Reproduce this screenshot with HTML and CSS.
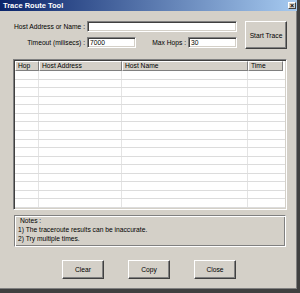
FILE: index.html
```html
<!DOCTYPE html>
<html>
<head>
<meta charset="utf-8">
<link rel="stylesheet" href="styles.css">
</head>
<body>
<div class="window">
  <div class="titlebar">
    <span class="title">Trace Route Tool</span>
    <span class="close">&#215;</span>
  </div>
  <div class="body">
    <div class="top">
      <div class="fields">
        <label class="lbl">Host Address or Name :</label>
        <div class="field"><span class="input wide"></span></div>
        <label class="lbl">Timeout (milisecs) :</label>
        <div class="field split">
          <span class="input short">7000</span>
          <label class="lbl hops">Max Hops :</label>
          <span class="input short">30</span>
        </div>
      </div>
      <div class="btn start">Start Trace</div>
    </div>

    <div class="list">
      <div class="head">
        <div class="hc c1">Hop</div>
        <div class="hc c2">Host Address</div>
        <div class="hc c3">Host Name</div>
        <div class="hc c4">Time</div>
      </div>
      <div class="rows">
        <div class="row"><i class="c1"></i><i class="c2"></i><i class="c3"></i><i class="c4"></i></div>
        <div class="row"><i class="c1"></i><i class="c2"></i><i class="c3"></i><i class="c4"></i></div>
        <div class="row"><i class="c1"></i><i class="c2"></i><i class="c3"></i><i class="c4"></i></div>
        <div class="row"><i class="c1"></i><i class="c2"></i><i class="c3"></i><i class="c4"></i></div>
        <div class="row"><i class="c1"></i><i class="c2"></i><i class="c3"></i><i class="c4"></i></div>
        <div class="row"><i class="c1"></i><i class="c2"></i><i class="c3"></i><i class="c4"></i></div>
        <div class="row"><i class="c1"></i><i class="c2"></i><i class="c3"></i><i class="c4"></i></div>
        <div class="row"><i class="c1"></i><i class="c2"></i><i class="c3"></i><i class="c4"></i></div>
        <div class="row"><i class="c1"></i><i class="c2"></i><i class="c3"></i><i class="c4"></i></div>
        <div class="row"><i class="c1"></i><i class="c2"></i><i class="c3"></i><i class="c4"></i></div>
        <div class="row"><i class="c1"></i><i class="c2"></i><i class="c3"></i><i class="c4"></i></div>
        <div class="row"><i class="c1"></i><i class="c2"></i><i class="c3"></i><i class="c4"></i></div>
        <div class="row"><i class="c1"></i><i class="c2"></i><i class="c3"></i><i class="c4"></i></div>
        <div class="row"><i class="c1"></i><i class="c2"></i><i class="c3"></i><i class="c4"></i></div>
        <div class="row"><i class="c1"></i><i class="c2"></i><i class="c3"></i><i class="c4"></i></div>
        <div class="row"><i class="c1"></i><i class="c2"></i><i class="c3"></i><i class="c4"></i></div>
      </div>
    </div>

    <div class="notes">
      <div class="ntitle">Notes :</div>
      <div>1) The traceroute results can be inaccurate.</div>
      <div>2) Try multiple times.</div>
    </div>

    <div class="buttons">
      <div class="btn act">Clear</div>
      <div class="btn act">Copy</div>
      <div class="btn act">Close</div>
    </div>
  </div>
</div>
</body>
</html>
```

FILE: styles.css
```css
* { box-sizing: border-box; }
html, body { margin: 0; padding: 0; }
body {
  width: 300px;
  height: 293px;
  background: #808080;
  font-family: "Liberation Sans", Arial, sans-serif;
  font-size: 6.7px;
  color: #000;
  overflow: hidden;
}
.window {
  width: 300px;
  height: 293px;
  background: #d4d0c8;
  border-right: 3px solid #404040;
  border-bottom: 4px solid #404040;
  box-shadow: inset -1px -1px #808080;
  display: flex;
  flex-direction: column;
}
.titlebar {
  height: 11px;
  flex: none;
  background: linear-gradient(to right, #0a246a, #a6caf0);
  display: flex;
  align-items: center;
  justify-content: space-between;
  padding: 0 1px 0 3px;
}
.title {
  color: #fff;
  font-weight: bold;
  font-size: 7.5px;
  line-height: 11px;
}
.close {
  width: 8px;
  height: 7px;
  background: #d4d0c8;
  border: 1px solid;
  border-color: #fff #404040 #404040 #fff;
  font-size: 7px;
  line-height: 5px;
  text-align: center;
  font-weight: bold;
}
.body {
  flex: 1;
  display: flex;
  flex-direction: column;
  padding: 10px 0 0 13px;
}
.top {
  display: flex;
  align-items: flex-start;
}
.fields {
  display: grid;
  grid-template-columns: 74px 150px;
  column-gap: 0;
  row-gap: 5px;
  align-items: center;
}
.lbl {
  text-align: right;
  padding-right: 2px;
  white-space: nowrap;
}
.field { display: flex; align-items: center; }
.split { justify-content: space-between; }
.hops { padding-right: 2px; margin-left: auto; }
.input {
  display: block;
  height: 11px;
  background: #fff;
  border: 1px solid;
  border-color: #808080 #fff #fff #808080;
  box-shadow: inset 1px 1px #404040, inset -1px -1px #d4d0c8;
  padding: 0 2px;
  line-height: 9px;
}
.wide { width: 150px; }
.short { width: 49px; }
.btn {
  background: #d4d0c8;
  border: 1px solid;
  border-color: #fff #404040 #404040 #fff;
  box-shadow: inset -1px -1px #808080;
  display: flex;
  align-items: center;
  justify-content: center;
  white-space: nowrap;
}
.start {
  width: 42px;
  height: 28px;
  margin-left: 8px;
}
.list {
  margin-top: 10px;
  width: 274px;
  height: 151px;
  border: 1px solid;
  border-color: #808080 #fff #fff #808080;
  box-shadow: inset 1px 1px #404040, inset -1px -1px #d4d0c8;
  padding: 1px;
  background: #fff;
  display: flex;
  flex-direction: column;
}
.head {
  display: flex;
  height: 10px;
  flex: none;
}
.hc {
  background: #d4d0c8;
  border: 1px solid;
  border-color: #fff #808080 #808080 #fff;
  line-height: 8px;
  padding-left: 2px;
  white-space: nowrap;
}
.c1 { width: 24px; }
.c2 { width: 83px; }
.c3 { width: 126px; }
.c4 { width: 37px; }
.head .c4 { width: 35px; }
.rows {
  flex: 1;
  display: flex;
  flex-direction: column;
}
.row {
  display: flex;
  height: 8.5625px;
  border-bottom: 1px solid #dcdcdc;
}
.row i {
  display: block;
  border-right: 1px solid #e4e4e4;
}
.row .c4 { border-right: none; }
.notes {
  margin-top: 5px;
  margin-left: 1px;
  width: 272px;
  height: 32px;
  border: 1px solid;
  border-color: #808080 #fff #fff #808080;
  box-shadow: inset 1px 1px #fff, inset -1px -1px #808080;
  padding: 0 0 0 3px;
  line-height: 9px;
}
.ntitle { padding-left: 2px; }
.buttons {
  display: flex;
  gap: 24px;
  margin-top: 13px;
  padding-left: 49px;
}
.act {
  width: 42px;
  height: 19px;
}
```
